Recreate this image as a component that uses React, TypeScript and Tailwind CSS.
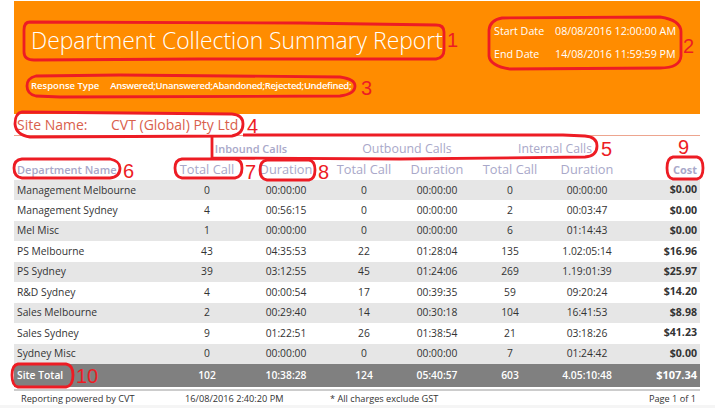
const font = "font-['Open_Sans',sans-serif]"

const columns = "grid grid-cols-[151px_84px_74px_82px_64px_82px_72px_77px]"

const rows = [
  ["Management Melbourne", "0", "00:00:00", "0", "00:00:00", "0", "00:00:00", "$0.00"],
  ["Management Sydney", "4", "00:56:15", "0", "00:00:00", "2", "00:03:47", "$0.00"],
  ["Mel Misc", "1", "00:00:00", "0", "00:00:00", "6", "01:14:43", "$0.00"],
  ["PS Melbourne", "43", "04:35:53", "22", "01:28:04", "135", "1.02:05:14", "$16.96"],
  ["PS Sydney", "39", "03:12:55", "45", "01:24:06", "269", "1.19:01:39", "$25.97"],
  ["R&D Sydney", "4", "00:00:54", "17", "00:39:35", "59", "09:20:24", "$14.20"],
  ["Sales Melbourne", "2", "00:29:40", "14", "00:30:18", "104", "16:41:53", "$8.98"],
  ["Sales Sydney", "9", "01:22:51", "26", "01:38:54", "21", "03:18:26", "$41.23"],
  ["Sydney Misc", "0", "00:00:00", "0", "00:00:00", "7", "01:24:42", "$0.00"],
]

const total = ["Site Total", "102", "10:38:28", "124", "05:40:57", "603", "4.05:10:48", "$107.34"]
const heads = ["Total Call", "Duration", "Total Call", "Duration", "Total Call", "Duration"]

function Row({ cells, className, costClass }: { cells: string[]; className: string; costClass: string }) {
  return (
    <div className={`${columns} items-center ${className}`}>
      {cells.map((c, i) => (
        <div
          key={i}
          className={i === 0 ? "pl-[3px]" : i === 7 ? `pr-[3px] text-right font-bold ${costClass}` : "text-center"}
        >
          {c}
        </div>
      ))}
    </div>
  )
}

// red marks someone drew over the screenshot
function Annotations() {
  const stroke = "#ed1c24"
  const marks = [
    "M30 22 Q24 22 24 30 L24 52 Q24 60 34 60 L200 59 L436 59 Q444 58 444 50 L444 32 Q444 25 436 25 L300 23 Z",
    "M502 18 L660 17 Q681 20 681 32 L681 56 Q680 68 660 68 L510 69 Q490 66 489 56 L489 30 Q490 20 502 18 Z",
    "M36 76 L120 75 L340 77 Q355 79 355 86 Q355 94 340 96 L60 97 L36 96 Q27 94 27 86 Q27 78 36 76 Z",
    "M22 112 L232 114 Q243 115 243 124 Q243 134 232 136 L30 137 Q16 135 15 124 Q15 113 22 112 Z",
    "M243 135 L563 135 L585 136 Q597 137 597 146 Q597 156 585 157 L400 159 L212 158 L212 135",
    "M22 159 L110 159 Q120 161 120 168 Q120 177 110 178 L22 178 Q14 177 14 168 Q14 160 22 159 Z",
    "M182 159 L235 159 Q242 160 242 168 Q242 177 235 178 L182 178 Q175 177 175 168 Q175 160 182 159 Z",
    "M267 160 L309 160 Q315 161 315 170 Q315 179 309 180 L267 180 Q260 179 260 170 Q260 161 267 160 Z",
    "M673 157 L697 157 Q703 158 703 168 Q703 178 697 179 L673 179 Q667 178 667 168 Q667 158 673 157 Z",
    "M18 364 L66 364 Q73 365 73 375 Q73 386 66 387 L18 387 Q12 386 12 375 Q12 365 18 364 Z",
  ]
  const labels: [string, string][] = [
    ["1", "left-[447px] top-[30px]"],
    ["2", "left-[683px] top-[36px]"],
    ["3", "left-[361px] top-[78px]"],
    ["4", "left-[247px] top-[116px]"],
    ["5", "left-[601px] top-[139px]"],
    ["6", "left-[123px] top-[161px]"],
    ["7", "left-[245px] top-[162px]"],
    ["8", "left-[318px] top-[162px]"],
    ["9", "left-[678px] top-[137px]"],
    ["10", "left-[76px] top-[366px]"],
  ]
  return (
    <>
      <svg className="absolute left-0 top-0" width="715" height="408" fill="none">
        {marks.map((d, i) => (
          <path key={i} d={d} stroke={stroke} strokeWidth="2.8" />
        ))}
      </svg>
      {labels.map(([t, pos]) => (
        <span key={t} className={`absolute ${pos} font-['Liberation_Sans',sans-serif] text-[20px] leading-[20px] text-[#ed1c24]`}>
          {t}
        </span>
      ))}
    </>
  )
}

export default function App() {
  return (
    <div className={`relative h-[408px] w-[715px] overflow-hidden bg-white ${font} text-[10.3px] text-[#333]`}>
      <div className="pl-[14px] pt-px">
        <div className="flex h-[113px] w-[686px] justify-between bg-[#ff8c00] text-white">
          <div className="pl-[17px]">
            <div className="pt-[22px] text-[22.9px] font-light leading-[36px]">Department Collection Summary Report</div>
            <div className="mt-[20px] flex gap-[11px] text-[9.5px] font-semibold leading-[14px]">
              <span>Response Type</span>
              <span className="tracking-[-0.33px]">Answered;Unanswered;Abandoned;Rejected;Undefined;</span>
            </div>
          </div>
          <div className="grid grid-cols-[61px_auto] content-start gap-y-[7px] pr-[24px] pt-[22px] text-[10.7px] leading-[16px]">
            <span>Start Date</span>
            <span>08/08/2016 12:00:00 AM</span>
            <span>End Date</span>
            <span>14/08/2016 11:59:59 PM</span>
          </div>
        </div>

        <div className="w-[686px] border-b border-[#eda58f]">
          <div className="flex h-[21px] items-center pl-[3px] text-[14px] text-[#d9604c]">
            <span className="w-[94px]">Site Name:</span>
            <span>CVT (Global) Pty Ltd</span>
          </div>
        </div>

        <div className={`${columns} h-[24px] w-[686px] items-center pt-[2px] text-[#a9a8c9]`}>
          <div />
          <div className="col-span-2 pl-[14px] text-center text-[11px] font-semibold">Inbound Calls</div>
          <div className="col-span-2 pl-[22px] text-center text-[12.4px]">Outbound Calls</div>
          <div className="col-span-2 pl-[18px] text-center text-[12.2px]">Internal Calls</div>
        </div>

        <div className={`${columns} h-[20px] w-[686px] items-center text-[12.8px] text-[#a9a8c9]`}>
          <div className="pl-[3px] text-[11px] font-semibold">Department Name</div>
          {heads.map((h, i) => (
            <div key={i} className="text-center">{h}</div>
          ))}
          <div className="pr-[3px] text-right text-[11px] font-bold">Cost</div>
        </div>

        <div className="w-[686px]">
          {rows.map((r, i) => (
            <Row key={r[0]} cells={r} costClass="text-[10.6px]" className={`h-[20.44px] ${i % 2 === 0 ? "bg-[#e6e6e6]" : ""}`} />
          ))}
          <Row cells={total} costClass="text-[11px]" className="h-[23px] bg-[#808080] font-semibold text-white" />
        </div>

        <div className="mt-[2px] flex h-[15px] w-[686px] items-center border-t-2 border-[#ccc] pt-[3px] text-[9.2px] text-[#333]">
          <span className="w-[171px] pl-[7px]">Reporting powered by CVT</span>
          <span className="w-[145px]">16/08/2016 2:40:20 PM</span>
          <span>* All charges exclude GST</span>
          <span className="ml-auto pr-[4px]">Page 1 of 1</span>
        </div>
      </div>
      <div className="absolute bottom-0 left-0 h-[3px] w-full bg-[#f5f5f5]" />
      <Annotations />
    </div>
  )
}
